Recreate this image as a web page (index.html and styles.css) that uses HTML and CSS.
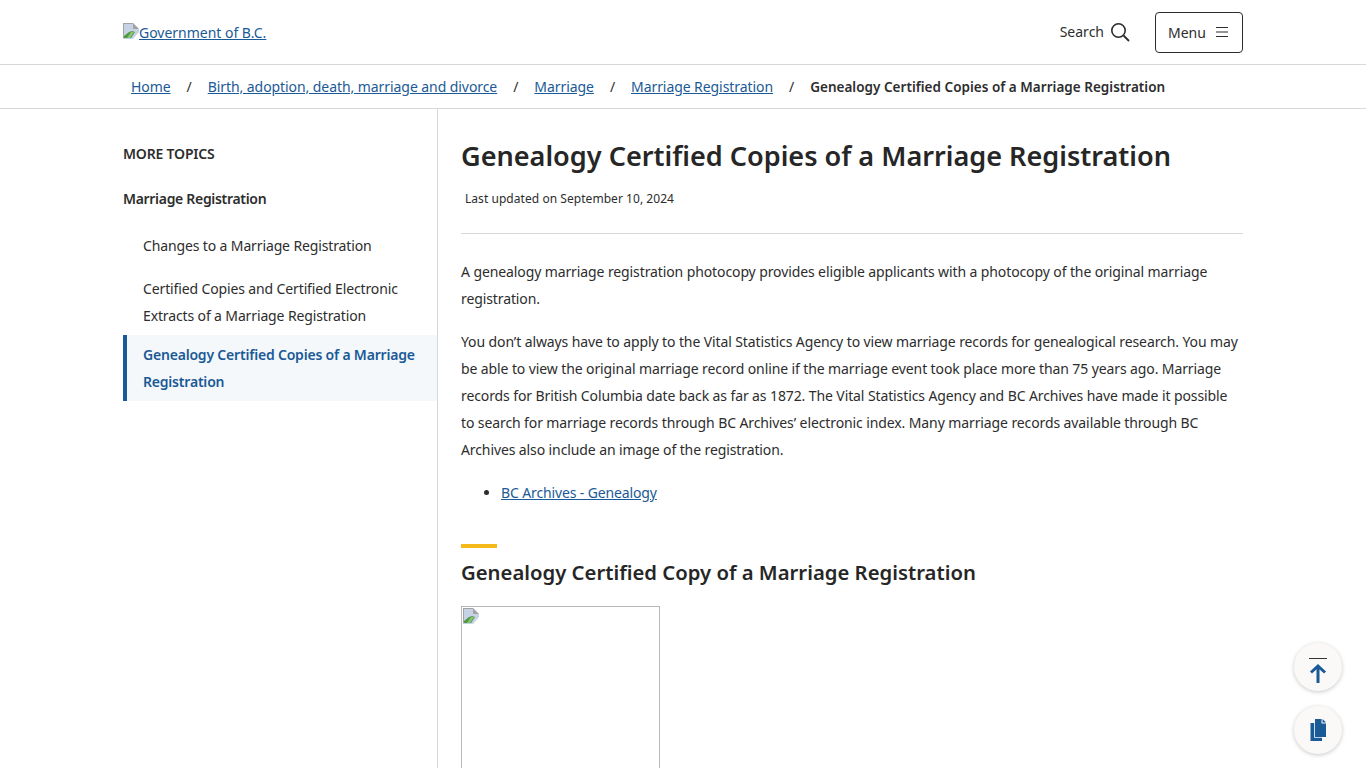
FILE: index.html
```html
<!DOCTYPE html>
<html lang="en">
<head>
<meta charset="utf-8">
<title>Genealogy Certified Copies of a Marriage Registration</title>
<link rel="stylesheet" href="styles.css">
</head>
<body>
<header class="site-header">
  <div class="container header-row">
    <a class="logo" href="#"><svg class="broken" viewBox="0 0 16 16" width="16" height="16"><path d="M0 0H10L16 6V9L10 16H0Z" fill="#c6d3e6"/><path d="M0 0H10L16 6H10V1H1V15H0Z" fill="#a3a3a3"/><path d="M1 15V13L6 9L9 8L12 9L8 15Z" fill="#4f9a3f"/><path d="M8 9L11 9L7 15H4Z" fill="#8cc47c"/></svg><span class="logo-text">Government of B.C.</span></a>
    <div class="header-actions">
      <span class="search"><span class="search-label">Search</span> <svg viewBox="0 0 20 20" width="20" height="20"><circle cx="8.5" cy="8.5" r="6.7" fill="none" stroke="#2d2d2d" stroke-width="1.6"/><path d="M13.5 13.5L19 19" stroke="#2d2d2d" stroke-width="1.8"/></svg></span>
      <button class="menu-btn">Menu <svg viewBox="0 0 12 12" width="12" height="12"><path d="M0 1.5H12M0 6H12M0 10.5H12" stroke="#2d2d2d" stroke-width="1.2"/></svg></button>
    </div>
  </div>
</header>
<nav class="crumbs">
  <div class="container crumb-row">
    <a href="#">Home</a><span class="sep">/</span>
    <a href="#">Birth, adoption, death, marriage and divorce</a><span class="sep">/</span>
    <a href="#">Marriage</a><span class="sep">/</span>
    <a href="#">Marriage Registration</a><span class="sep">/</span>
    <strong>Genealogy Certified Copies of a Marriage Registration</strong>
  </div>
</nav>
<div class="container layout">
  <aside class="side">
    <div class="more">MORE TOPICS</div>
    <div class="side-title">Marriage Registration</div>
    <ul class="side-list">
      <li>Changes to a Marriage Registration</li>
      <li>Certified Copies and Certified Electronic Extracts of a Marriage Registration</li>
      <li class="active">Genealogy Certified Copies of a Marriage Registration</li>
    </ul>
  </aside>
  <main class="content">
    <h1>Genealogy Certified Copies of a Marriage Registration</h1>
    <p class="updated">Last updated on September 10, 2024</p>
    <hr>
    <p>A genealogy marriage registration photocopy provides eligible applicants with a photocopy of the original marriage registration.</p>
    <p>You don’t always have to apply to the Vital Statistics Agency to view marriage records for genealogical research. You may be able to view the original marriage record online if the marriage event took place more than 75 years ago. Marriage records for British Columbia date back as far as 1872. The Vital Statistics Agency and BC Archives have made it possible to search for marriage records through BC Archives’ electronic index. Many marriage records available through BC Archives also include an image of the registration.</p>
    <ul class="links"><li><a href="#">BC Archives - Genealogy</a></li></ul>
    <div class="accent"></div>
    <h2>Genealogy Certified Copy of a Marriage Registration</h2>
    <div class="image-box"><svg class="broken" viewBox="0 0 16 16" width="16" height="16"><path d="M0 0H10L16 6V9L10 16H0Z" fill="#c6d3e6"/><path d="M0 0H10L16 6H10V1H1V15H0Z" fill="#a3a3a3"/><path d="M1 15V13L6 9L9 8L12 9L8 15Z" fill="#4f9a3f"/><path d="M8 9L11 9L7 15H4Z" fill="#8cc47c"/></svg></div>
  </main>
</div>
<div class="floats">
  <button class="fab"><svg viewBox="0 0 18 32" width="18" height="32"><path d="M0 7.5H18" stroke="#333" stroke-width="1"/><path d="M9 32V16M2 21.5L9 15L16 21.5" fill="none" stroke="#1a5a96" stroke-width="3"/></svg></button>
  <button class="fab"><svg viewBox="0 0 16 22" width="16" height="22"><path d="M5 0H11.5V4.5H16V18H5Z" fill="#1a5a96"/><path d="M12.5 0L16 3.5H12.5Z" fill="#1a5a96"/><path d="M0.5 4H4.2V18.8H12V22H0.5Z" fill="#1a5a96"/></svg></button>
</div>
</body>
</html>
```
FILE: styles.css
```css
* { box-sizing: border-box; }
html, body { margin: 0; height: 768px; overflow: hidden; }
body { font-family: "Noto Sans", sans-serif; font-size: 14px; color: #2d2d2d; background: #fff; }
a { color: #1a5a96; }
.container { width: 1120px; margin: 0 auto; }
.site-header { height: 65px; border-bottom: 1px solid #d8d8d8; }
.header-row { height: 64px; display: flex; align-items: center; justify-content: space-between; }
.logo { display: flex; align-items: flex-start; height: 16px; margin-top: -3px; }
.logo-text { line-height: 20px; letter-spacing: -0.02px; }
.broken { display: block; }
.header-actions { display: flex; align-items: center; gap: 25px; }
.search { display: flex; align-items: center; gap: 8px; }
.search-label { line-height: 18px; }
.search svg { margin-left: -2px; }
.menu-btn { display: flex; align-items: center; gap: 10px; height: 41px; width: 88px; padding: 0 12px; background: #fff; border: 1px solid #2d2d2d; border-radius: 4px; font: inherit; color: #2d2d2d; }
.crumbs { height: 44px; border-bottom: 1px solid #d8d8d8; }
.crumb-row { height: 43px; display: flex; align-items: center; padding-left: 8px; white-space: nowrap; letter-spacing: -0.07px; }
.crumb-row strong { font-weight: 600; font-size: 13.5px; letter-spacing: 0.02px; }
.sep { margin: 0 16px; }
.layout { display: flex; }
.side { width: 315px; flex: none; height: 660px; border-right: 1px solid #d8d8d8; padding-top: 35px; letter-spacing: -0.13px; }
.more { font-weight: 600; line-height: 20px; letter-spacing: -0.18px; }
.side-title { font-weight: 600; line-height: 20px; margin-top: 25px; letter-spacing: -0.31px; }
.side-list { list-style: none; margin: 17px 0 0; padding: 0; }
.side-list li { padding: 6px 20px 10px; line-height: 27px; }
.side-list li.active { border-left: 4px solid #1a5a96; padding: 6px 0 6px 16px; background: #f4f8fb; color: #1a5a96; font-weight: 600; margin-top: -4px; letter-spacing: -0.2px; }
.content { margin-left: 23px; width: 782px; }
h1 { font-size: 27.08px; font-weight: 600; line-height: 38px; margin: 28px 0 0; color: #262626; }
.updated { font-size: 12px; line-height: 20px; margin: 0; padding-left: 4px; }
hr { border: 0; border-top: 1px solid #d8d8d8; margin: 24px 0 0; }
p { margin: 0; }
.content > p { line-height: 27px; margin-top: 16px; letter-spacing: -0.105px; }
.content > hr + p { margin-top: 24px; }
.content > .updated { margin-top: 14px; line-height: 20px; letter-spacing: 0.05px; }
.links { margin: 16px 0 0; padding-left: 40px; line-height: 27px; letter-spacing: -0.13px; }
.accent { width: 36px; height: 4px; background: #f6b91a; margin-top: 38px; }
h2 { font-size: 20.3px; font-weight: 600; line-height: 28px; margin: 10px 0 0; color: #262626; }
.image-box { width: 199px; height: 300px; border: 1px solid #b8b8b8; margin-top: 20px; padding: 1px; }
.floats { position: fixed; right: 24px; bottom: 14px; display: flex; flex-direction: column; gap: 15px; }
.fab { width: 48px; height: 48px; border: 0; border-radius: 50%; background: #faf9f8; box-shadow: 0 1px 4px rgba(0,0,0,.22); display: flex; align-items: center; justify-content: center; padding: 0; }
```
